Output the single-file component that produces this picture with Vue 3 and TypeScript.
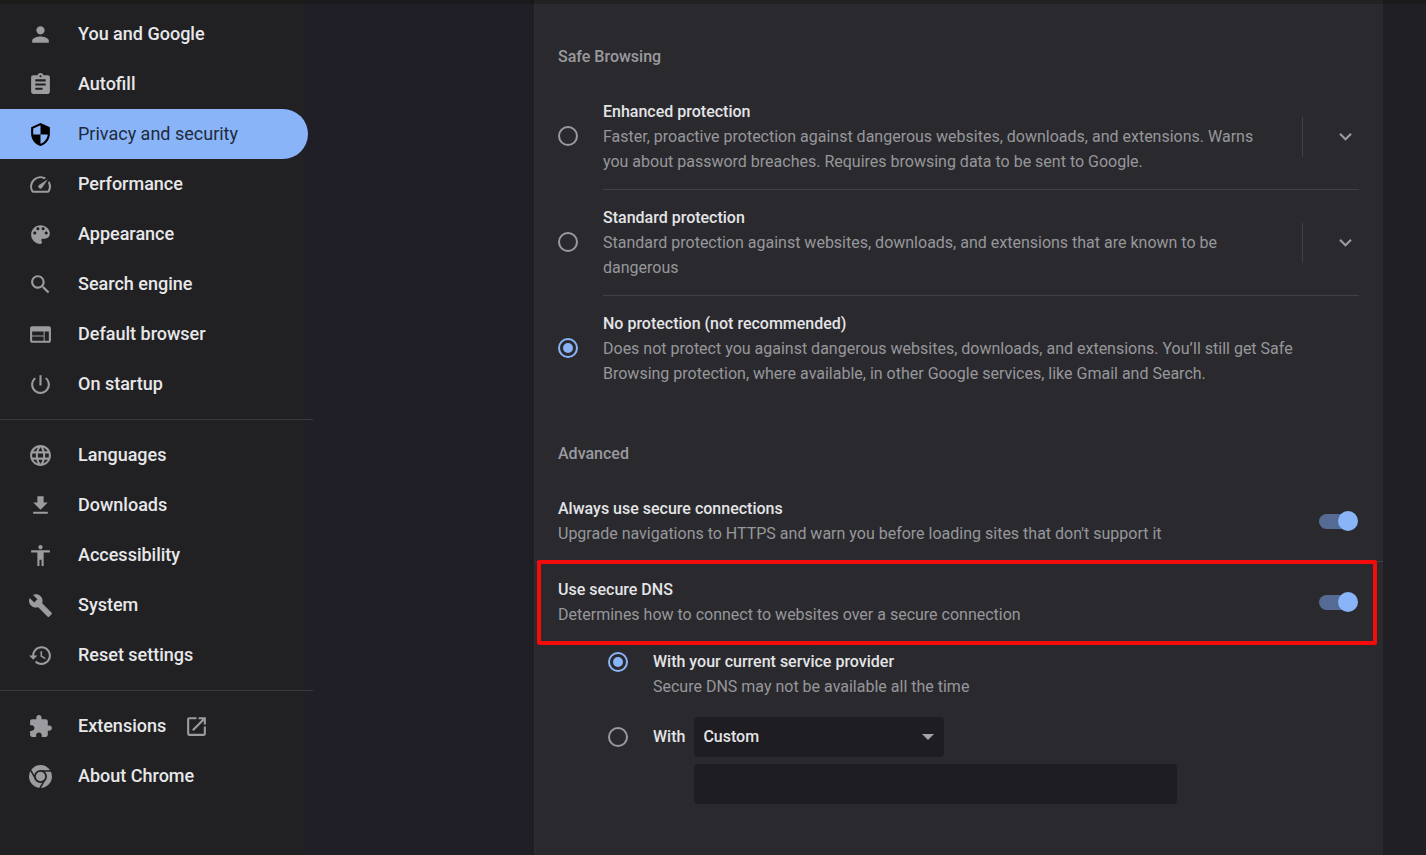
<script setup lang="ts">
import { ref } from 'vue'

interface NavItem {
  id: string
  label: string
  icon: string
  external?: boolean
}

interface ProtectionLevel {
  id: string
  title: string
  text: string
  expandable: boolean
}

const navGroups: NavItem[][] = [
  [
    { id: 'people', label: 'You and Google', icon: 'M12 12c2.21 0 4-1.79 4-4s-1.79-4-4-4-4 1.79-4 4 1.79 4 4 4zm0 2c-2.67 0-8 1.34-8 4v2h16v-2c0-2.66-5.33-4-8-4z' },
    { id: 'autofill', label: 'Autofill', icon: 'M19 3h-4.18C14.4 1.84 13.3 1 12 1c-1.3 0-2.4.84-2.82 2H5c-1.1 0-2 .9-2 2v14c0 1.1.9 2 2 2h14c1.1 0 2-.9 2-2V5c0-1.1-.9-2-2-2zm-7 0c.55 0 1 .45 1 1s-.45 1-1 1-1-.45-1-1 .45-1 1-1zm2 14H7v-2h7v2zm3-4H7v-2h10v2zm0-4H7V7h10v2z' },
    { id: 'privacy', label: 'Privacy and security', icon: 'M12 1L3 5v6c0 5.55 3.84 10.74 9 12 5.16-1.26 9-6.45 9-12V5l-9-4zm0 10.99h7c-.53 4.12-3.28 7.79-7 8.94V12H5V6.3l7-3.11v8.8z' },
    { id: 'performance', label: 'Performance', icon: 'M20.38 8.57l-1.23 1.85a8 8 0 0 1-.22 7.58H5.07A8 8 0 0 1 15.58 6.85l1.85-1.23A10 10 0 0 0 3.35 19a2 2 0 0 0 1.72 1h13.85a2 2 0 0 0 1.74-1 10 10 0 0 0-.27-10.44zm-9.79 6.84a2 2 0 0 0 2.83 0l5.66-8.49-8.49 5.66a2 2 0 0 0 0 2.83z' },
    { id: 'appearance', label: 'Appearance', icon: 'M12 3c-4.97 0-9 4.03-9 9s4.03 9 9 9c.83 0 1.5-.67 1.5-1.5 0-.39-.15-.74-.39-1.01-.23-.26-.38-.61-.38-.99 0-.83.67-1.5 1.5-1.5H16c2.76 0 5-2.24 5-5 0-4.42-4.03-8-9-8zm-5.5 9c-.83 0-1.5-.67-1.5-1.5S5.67 9 6.5 9 8 9.67 8 10.5 7.33 12 6.5 12zm3-4C8.67 8 8 7.33 8 6.5S8.67 5 9.5 5s1.5.67 1.5 1.5S10.33 8 9.5 8zm5 0c-.83 0-1.5-.67-1.5-1.5S13.67 5 14.5 5s1.5.67 1.5 1.5S15.33 8 14.5 8zm3 4c-.83 0-1.5-.67-1.5-1.5S16.67 9 17.5 9s1.5.67 1.5 1.5-.67 1.5-1.5 1.5z' },
    { id: 'search', label: 'Search engine', icon: 'M15.5 14h-.79l-.28-.27C15.41 12.59 16 11.11 16 9.5 16 5.91 13.09 3 9.5 3S3 5.91 3 9.5 5.91 16 9.5 16c1.61 0 3.09-.59 4.23-1.57l.27.28v.79l5 4.99L20.49 19l-4.99-5zm-6 0C7.01 14 5 11.99 5 9.5S7.01 5 9.5 5 14 7.01 14 9.5 11.99 14 9.5 14z' },
    { id: 'browser', label: 'Default browser', icon: 'M20 4H4c-1.1 0-1.99.9-1.99 2L2 18c0 1.1.9 2 2 2h16c1.1 0 2-.9 2-2V6c0-1.1-.9-2-2-2zm-5 14H4v-4h11v4zm0-5H4V9h11v4zm5 5h-4V9h4v9z' },
    { id: 'startup', label: 'On startup', icon: 'M13 3h-2v10h2V3zm4.83 2.17l-1.42 1.42C17.99 7.86 19 9.81 19 12c0 3.87-3.13 7-7 7s-7-3.13-7-7c0-2.19 1.01-4.14 2.58-5.42L6.17 5.17C4.23 6.82 3 9.26 3 12c0 4.97 4.03 9 9 9s9-4.03 9-9c0-2.74-1.23-5.18-3.17-6.83z' },
  ],
  [
    { id: 'languages', label: 'Languages', icon: 'M11.99 2C6.47 2 2 6.48 2 12s4.47 10 9.99 10C17.52 22 22 17.52 22 12S17.52 2 11.99 2zm6.93 6h-2.95c-.32-1.25-.78-2.45-1.38-3.56 1.84.63 3.37 1.91 4.33 3.56zM12 4.04c.83 1.2 1.48 2.53 1.91 3.96h-3.82c.43-1.43 1.08-2.76 1.91-3.96zM4.26 14C4.1 13.36 4 12.69 4 12s.1-1.36.26-2h3.38c-.08.66-.14 1.32-.14 2s.06 1.34.14 2H4.26zm.82 2h2.95c.32 1.25.78 2.45 1.38 3.56-1.84-.63-3.37-1.9-4.33-3.56zm2.95-8H5.08c.96-1.66 2.49-2.93 4.33-3.56C8.81 5.55 8.35 6.75 8.03 8zM12 19.96c-.83-1.2-1.48-2.53-1.91-3.96h3.82c-.43 1.43-1.08 2.76-1.91 3.96zM14.34 14H9.66c-.09-.66-.16-1.32-.16-2s.07-1.35.16-2h4.68c.09.65.16 1.32.16 2s-.07 1.34-.16 2zm.25 5.56c.6-1.11 1.06-2.31 1.38-3.56h2.95c-.96 1.65-2.49 2.93-4.33 3.56zM16.36 14c.08-.66.14-1.32.14-2s-.06-1.34-.14-2h3.38c.16.64.26 1.31.26 2s-.1 1.36-.26 2h-3.38z' },
    { id: 'downloads', label: 'Downloads', icon: 'M19 9h-4V3H9v6H5l7 7 7-7zM5 18v2h14v-2H5z' },
    { id: 'accessibility', label: 'Accessibility', icon: 'M12 2c1.1 0 2 .9 2 2s-.9 2-2 2-2-.9-2-2 .9-2 2-2zm9 7h-6v13h-2v-6h-2v6H9V9H3V7h18v2z' },
    { id: 'system', label: 'System', icon: 'M22.7 19l-9.1-9.1c.9-2.3.4-5-1.5-6.9-2-2-5-2.4-7.4-1.3L9 6 6 9 1.6 4.7C.4 7.1.9 10.1 2.9 12.1c1.9 1.9 4.6 2.4 6.9 1.5l9.1 9.1c.4.4 1 .4 1.4 0l2.3-2.3c.5-.4.5-1.1.1-1.4z' },
    { id: 'reset', label: 'Reset settings', icon: 'M13 3c-4.97 0-9 4.03-9 9H1l3.89 3.89.07.14L9 12H6c0-3.87 3.13-7 7-7s7 3.13 7 7-3.13 7-7 7c-1.93 0-3.68-.79-4.94-2.06l-1.42 1.42C8.27 19.99 10.51 21 13 21c4.97 0 9-4.03 9-9s-4.03-9-9-9zm-1 5v5l4.28 2.54.72-1.21-3.5-2.08V8H12z' },
  ],
  [
    { id: 'extensions', label: 'Extensions', external: true, icon: 'M20.5 11H19V7c0-1.1-.9-2-2-2h-4V3.5C13 2.12 11.88 1 10.5 1S8 2.12 8 3.5V5H4c-1.1 0-1.99.9-1.99 2v3.8H3.5c1.49 0 2.7 1.21 2.7 2.7s-1.21 2.7-2.7 2.7H2V20c0 1.1.9 2 2 2h3.8v-1.5c0-1.49 1.21-2.7 2.7-2.7s2.7 1.21 2.7 2.7V22H17c1.1 0 2-.9 2-2v-4h1.5c1.38 0 2.5-1.12 2.5-2.5S21.88 11 20.5 11z' },
    { id: 'about', label: 'About Chrome', icon: '' },
  ],
]

const levels: ProtectionLevel[] = [
  { id: 'enhanced', title: 'Enhanced protection', text: 'Faster, proactive protection against dangerous websites, downloads, and extensions. Warns you about password breaches. Requires browsing data to be sent to Google.', expandable: true },
  { id: 'standard', title: 'Standard protection', text: 'Standard protection against websites, downloads, and extensions that are known to be dangerous', expandable: true },
  { id: 'none', title: 'No protection (not recommended)', text: 'Does not protect you against dangerous websites, downloads, and extensions. You’ll still get Safe Browsing protection, where available, in other Google services, like Gmail and Search.', expandable: false },
]

const current = ref('privacy')
const level = ref('none')
const httpsOnly = ref(true)
const secureDns = ref(true)
const dnsMode = ref('provider')
const resolver = ref('custom')
const customDns = ref('')
</script>

<template>
  <div class="page">
    <nav class="sidebar" aria-label="Settings">
      <div v-for="(group, index) in navGroups" :key="index" class="group">
        <a
          v-for="item in group"
          :key="item.id"
          :href="'#' + item.id"
          class="item"
          :class="{ active: current === item.id }"
          @click.prevent="current = item.id"
        >
          <svg v-if="item.id === 'about'" class="icon" viewBox="0 0 24 24" aria-hidden="true">
            <circle cx="12" cy="12" r="11" />
            <g class="cut">
              <circle cx="12" cy="12" r="5.5" />
              <path d="M12 6.8H22.5M7.5 14.6L2.2 5.5M16.5 14.6L11.2 23.7" />
            </g>
            <circle cx="12" cy="12" r="4.5" />
          </svg>
          <svg v-else class="icon" viewBox="0 0 24 24" aria-hidden="true"><path :d="item.icon" /></svg>
          <span class="label">{{ item.label }}</span>
          <svg v-if="item.external" class="icon launch" viewBox="0 0 24 24" aria-hidden="true">
            <path d="M19 19H5V5h7V3H5c-1.11 0-2 .9-2 2v14c0 1.1.89 2 2 2h14c1.1 0 2-.9 2-2v-7h-2v7zM14 3v2h3.59l-9.83 9.83 1.41 1.41L19 6.41V10h2V3h-7z" />
          </svg>
        </a>
      </div>
    </nav>

    <main class="panel">
      <section class="section">
        <h2>Safe Browsing</h2>
        <div v-for="entry in levels" :key="entry.id" class="level">
          <input :id="entry.id" v-model="level" class="radio" type="radio" name="level" :value="entry.id" />
          <div class="level-body">
            <label :for="entry.id" class="copy">
              <span class="title">{{ entry.title }}</span>
              <span class="text">{{ entry.text }}</span>
            </label>
            <button v-if="entry.expandable" type="button" class="expand" :aria-label="'More about ' + entry.title">
              <svg class="icon" viewBox="0 0 24 24" aria-hidden="true"><path d="M16.59 8.59L12 13.17 7.41 8.59 6 10l6 6 6-6z" /></svg>
            </button>
          </div>
        </div>
      </section>

      <section class="section">
        <h2>Advanced</h2>
        <div class="setting">
          <label for="https" class="copy">
            <span class="title">Always use secure connections</span>
            <span class="text">Upgrade navigations to HTTPS and warn you before loading sites that don't support it</span>
          </label>
          <input id="https" v-model="httpsOnly" class="toggle" type="checkbox" role="switch" />
        </div>
        <div class="setting highlighted">
          <label for="dns" class="copy">
            <span class="title">Use secure DNS</span>
            <span class="text">Determines how to connect to websites over a secure connection</span>
          </label>
          <input id="dns" v-model="secureDns" class="toggle" type="checkbox" role="switch" />
        </div>
        <div class="dns">
          <div class="dns-row">
            <input id="provider" v-model="dnsMode" class="radio" type="radio" name="dns-mode" value="provider" />
            <label for="provider" class="copy">
              <span class="title">With your current service provider</span>
              <span class="text">Secure DNS may not be available all the time</span>
            </label>
          </div>
          <div class="dns-row custom">
            <input id="with" v-model="dnsMode" class="radio" type="radio" name="dns-mode" value="custom" />
            <label for="with" class="title">With</label>
            <div class="fields">
              <div class="select">
                <select v-model="resolver" aria-label="DNS provider">
                  <option value="custom">Custom</option>
                </select>
                <svg class="arrow" viewBox="0 0 12 6" aria-hidden="true"><path d="M0 0h12L6 6z" /></svg>
              </div>
              <input v-model="customDns" class="field" type="text" aria-label="Custom DNS provider" />
            </div>
          </div>
        </div>
      </section>
    </main>
  </div>
</template>

<style>
body {
  margin: 0;
  background: #202023;
}
</style>

<style scoped>
.page {
  position: relative;
  display: grid;
  grid-template-columns: 313px minmax(0, 221px) minmax(0, 1fr) 43px;
  min-height: 100vh;
  background: linear-gradient(to right, #212123 305px, #201f28 305px 530px, #1f1e23 530px, #202024);
  color: #e8eaed;
  font-family: Roboto, "Liberation Sans", sans-serif;
  font-size: 16px;
  line-height: 25px;
}

/* Shadow cast by the toolbar above the page */
.page::before {
  position: absolute;
  inset: 0 0 auto;
  height: 4px;
  background: rgba(16, 16, 12, 0.35);
  content: "";
}

.sidebar {
  padding-top: 9px;
}

.group + .group {
  margin-top: 10px;
  padding-top: 10px;
  border-top: 1px solid #3a3a3c;
}

.item {
  display: flex;
  align-items: center;
  box-sizing: border-box;
  height: 50px;
  margin-right: 5px;
  padding-left: 28px;
  gap: 25px;
  border-radius: 0 25px 25px 0;
  color: #e8e8ea;
  font-size: 18px;
  font-weight: 500;
  text-decoration: none;
}

.item.active {
  background: #8ab4f8;
  color: #202a3c;
  font-weight: 400;
}

.label {
  padding-bottom: 2px;
}

.icon {
  flex: none;
  width: 25px;
  height: 25px;
  fill: #9c9ca0;
}

.active .icon {
  fill: #000;
}

.launch {
  margin-left: -7px;
}

.cut {
  fill: #212123;
  stroke: #212123;
  stroke-width: 1.5;
}

.panel {
  grid-column: 3;
  border-left: 1px solid #2e2e31;
  background: #2a2a2e;
  padding-top: 44px;
}

.section + .section {
  margin-top: 40px;
}

h2 {
  margin: 0 24px 15px 23px;
  color: #9a9a9e;
  font-size: 16px;
  font-weight: 500;
}

.level {
  display: flex;
  align-items: center;
  gap: 25px;
  margin: 0 24px 0 23px;
}

.level-body {
  display: flex;
  flex: 1;
  align-items: center;
  min-width: 0;
  padding: 15px 0;
  border-bottom: 1px solid #414145;
}

.level:last-child .level-body {
  border-bottom: 0;
}

.copy {
  flex: 1;
  min-width: 0;
}

.title,
.text {
  display: block;
}

.title {
  color: #e4e4e7;
  font-weight: 500;
}

.text {
  color: #97979b;
}

.expand {
  display: flex;
  align-items: center;
  height: 40px;
  margin-left: 20px;
  padding: 0 1px 0 30px;
  border: 0;
  border-left: 1px solid #414145;
  background: none;
}

.radio {
  display: grid;
  flex: none;
  place-content: center;
  box-sizing: border-box;
  width: 20px;
  height: 20px;
  margin: 0;
  appearance: none;
  border: 2px solid #9a9a9e;
  border-radius: 50%;
}

.level > .radio {
  margin-bottom: 2px;
}

.radio:checked {
  border-color: #8ab4f8;
}

.radio:checked::before {
  width: 10px;
  height: 10px;
  border-radius: 50%;
  background: #8ab4f8;
  content: "";
}

.setting {
  position: relative;
  display: flex;
  align-items: center;
  gap: 20px;
  padding: 15px 25px 15px 23px;
}

.setting + .setting {
  border-top: 1px solid #414145;
}

.highlighted::after {
  position: absolute;
  inset: -2px 6px -3px 2px;
  border: 4px solid #f40b0b;
  border-radius: 2px;
  content: "";
  pointer-events: none;
}

.toggle {
  display: flex;
  flex: none;
  align-items: center;
  justify-content: flex-end;
  box-sizing: border-box;
  width: 39px;
  height: 20px;
  margin: 0;
  appearance: none;
}

.toggle::before {
  width: 35px;
  height: 15px;
  margin-right: -16px;
  border-radius: 8px;
  background: #566b94;
  content: "";
}

.toggle::after {
  width: 20px;
  height: 20px;
  border-radius: 50%;
  background: #8ab4f8;
  content: "";
}

.toggle:not(:checked) {
  flex-direction: row-reverse;
}

.dns {
  padding: 7px 24px 50px 73px;
}

.dns-row {
  display: flex;
  align-items: flex-start;
  gap: 25px;
}

.dns-row > .radio {
  margin-top: 3px;
}

.custom {
  margin-top: 18px;
}

.custom > .radio {
  margin-top: 10px;
}

.custom > .title {
  padding-top: 7px;
}

.fields {
  display: flex;
  flex: 1;
  flex-direction: column;
  gap: 7px;
  max-width: 483px;
  margin-left: -16px;
}

.select {
  position: relative;
  width: 250px;
}

select,
.field {
  display: block;
  box-sizing: border-box;
  width: 100%;
  height: 40px;
  margin: 0;
  padding: 0 9px 2px;
  appearance: none;
  border: 0;
  border-radius: 4px;
  background: #1e1d21;
  color: #e4e4e7;
  font: 500 16px/25px Roboto, "Liberation Sans", sans-serif;
}

.arrow {
  position: absolute;
  top: 17px;
  right: 10px;
  width: 12px;
  height: 6px;
  fill: #a4a4a8;
  pointer-events: none;
}
</style>
